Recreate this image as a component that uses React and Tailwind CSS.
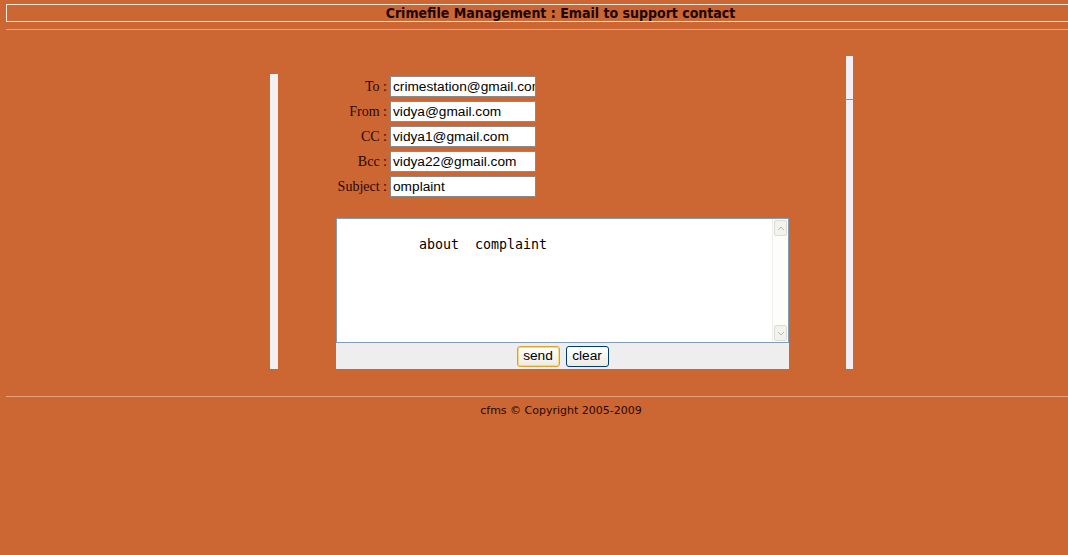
import React from 'react';

const fields = [
  { label: 'To', value: 'crimestation@gmail.com' },
  { label: 'From', value: 'vidya@gmail.com' },
  { label: 'CC', value: 'vidya1@gmail.com' },
  { label: 'Bcc', value: 'vidya22@gmail.com' },
  { label: 'Subject', value: 'omplaint' },
];

const Field = ({ label, value }) => (
  <div className="flex items-center h-[21px]">
    <div className="w-[54px] text-right pr-[3px] text-[14px] text-[#2a0800] font-['Liberation_Serif',serif] whitespace-nowrap">
      {label} :
    </div>
    <div className="w-[146px] h-[21px] bg-white border border-[#8a8a8a] overflow-hidden">
      <div className="pl-[2px] text-[13.7px] leading-[19px] text-black font-['Liberation_Sans',Arial,sans-serif] whitespace-nowrap">
        {value}
      </div>
    </div>
  </div>
);

const App = () => {
  return (
    <div className="min-h-[555px] w-full bg-[#cc6633] overflow-hidden pt-[4px]">
      <div className="ml-[6px] w-[1108px] h-[18px] border-y border-l border-[#f6e6d6] flex items-center justify-center">
        <span className="text-[14px] font-bold text-[#1a0500] font-['DejaVu_Sans_Condensed','DejaVu_Sans',sans-serif]">
          Crimefile Management : Email to support contact
        </span>
      </div>
      <div className="ml-[6px] mt-[7px] h-px bg-[#e4a37c]" />

      <div className="flex items-end ml-[270px] mt-[25px]">
        <div className="w-[8px] h-[295px] bg-[#f3f0f2]" />

        <div className="ml-[58px] w-[453px] flex flex-col pt-[21px]">
          <div className="flex flex-col gap-[4px]">
            {fields.map((f) => (
              <Field key={f.label} label={f.label} value={f.value} />
            ))}
          </div>

          <div className="mt-[21px] h-[125px] bg-white border border-[#7f9db9] flex">
            <div className="flex-1 pt-[18px] pl-[82px] text-[13.3px] leading-[16px] text-black font-['DejaVu_Sans_Mono',monospace] whitespace-pre">
              about  complaint
            </div>
            <div className="w-[16px] bg-[#fdfdfb] border-l border-[#eeeeea] flex flex-col justify-between">
              <div className="h-[16px] mx-px mt-px bg-[#f2f2ee] border border-[#dcdcd6] rounded-[2px] flex items-center justify-center">
                <svg width="8" height="5" viewBox="0 0 8 5">
                  <path d="M1 4 L4 1 L7 4" fill="none" stroke="#b8b8b0" strokeWidth="1" />
                </svg>
              </div>
              <div className="h-[16px] mx-px mb-px bg-[#f2f2ee] border border-[#dcdcd6] rounded-[2px] flex items-center justify-center">
                <svg width="8" height="5" viewBox="0 0 8 5">
                  <path d="M1 1 L4 4 L7 1" fill="none" stroke="#b8b8b0" strokeWidth="1" />
                </svg>
              </div>
            </div>
          </div>

          <div className="h-[26px] bg-[#eeeeee] flex items-center justify-center gap-[6px]">
            <button className="w-[43px] h-[21px] rounded-[3px] border border-[#e0a030] bg-gradient-to-b from-white to-[#ecebe3] text-[13.7px] leading-none text-black font-['Liberation_Sans',Arial,sans-serif] shadow-[inset_0_0_0_1px_#f8d880]">
              send
            </button>
            <button className="w-[43px] h-[21px] rounded-[3px] border border-[#003c74] bg-gradient-to-b from-white to-[#ecebe3] text-[13.7px] leading-none text-black font-['Liberation_Sans',Arial,sans-serif]">
              clear
            </button>
          </div>
        </div>

        <div className="ml-[57px] w-[7px] h-[313px] bg-[#f1eff4] flex flex-col">
          <div className="h-[43px]" />
          <div className="h-px bg-[#9a8a90] w-[9px] -ml-px" />
        </div>
      </div>

      <div className="ml-[6px] mt-[27px] h-px bg-[#e4a37c]" />
      <div className="mt-[7px] text-center text-[11px] leading-[13px] text-[#2a0800] font-['DejaVu_Sans',Verdana,sans-serif] pl-[54px]">
        cfms © Copyright 2005-2009
      </div>
    </div>
  );
};

export default App;
